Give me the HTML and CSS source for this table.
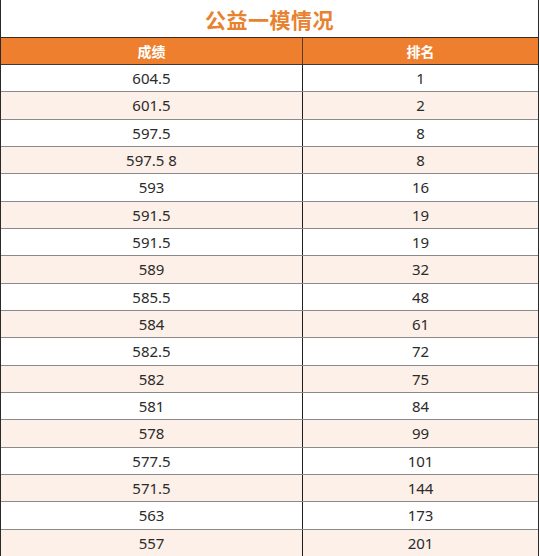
FILE: index.html
```html
<!DOCTYPE html>
<html lang="zh">
<head>
<meta charset="utf-8">
<title>公益一模情况</title>
<link rel="stylesheet" href="styles.css">
</head>
<body>
<div class="sheet">
  <div class="title">公益一模情况</div>
  <div class="head">
    <div class="cell">成绩</div>
    <div class="cell">排名</div>
  </div>
  <div class="body">
    <div class="row"><div class="cell">604.5</div><div class="cell">1</div></div>
    <div class="row alt"><div class="cell">601.5</div><div class="cell">2</div></div>
    <div class="row"><div class="cell">597.5</div><div class="cell">8</div></div>
    <div class="row alt"><div class="cell">597.5 8</div><div class="cell">8</div></div>
    <div class="row"><div class="cell">593</div><div class="cell">16</div></div>
    <div class="row alt"><div class="cell">591.5</div><div class="cell">19</div></div>
    <div class="row"><div class="cell">591.5</div><div class="cell">19</div></div>
    <div class="row alt"><div class="cell">589</div><div class="cell">32</div></div>
    <div class="row"><div class="cell">585.5</div><div class="cell">48</div></div>
    <div class="row alt"><div class="cell">584</div><div class="cell">61</div></div>
    <div class="row"><div class="cell">582.5</div><div class="cell">72</div></div>
    <div class="row alt"><div class="cell">582</div><div class="cell">75</div></div>
    <div class="row"><div class="cell">581</div><div class="cell">84</div></div>
    <div class="row alt"><div class="cell">578</div><div class="cell">99</div></div>
    <div class="row"><div class="cell">577.5</div><div class="cell">101</div></div>
    <div class="row alt"><div class="cell">571.5</div><div class="cell">144</div></div>
    <div class="row"><div class="cell">563</div><div class="cell">173</div></div>
    <div class="row alt"><div class="cell">557</div><div class="cell">201</div></div>
  </div>
</div>
</body>
</html>
```
FILE: styles.css
```css
html, body {
  margin: 0;
  padding: 0;
  background: #ffffff;
}
body {
  width: 540px;
  height: 556px;
  overflow: hidden;
  font-family: "Noto Sans", "Noto Sans CJK SC", sans-serif;
}
.sheet {
  width: 539px;
  height: 556px;
  border-left: 1px solid #2a2a2a;
  border-right: 1px solid #2a2a2a;
  box-sizing: border-box;
  display: flex;
  flex-direction: column;
}
.title {
  height: 37px;
  display: flex;
  align-items: center;
  justify-content: center;
  color: #e8822f;
  font-family: "Noto Sans CJK SC", sans-serif;
  font-weight: 700;
  font-size: 21px;
  letter-spacing: 0.5px;
  border-bottom: 1px solid #3a2a20;
}
.head {
  height: 26px;
  display: grid;
  grid-template-columns: 302px 1fr;
  background: #ee7f2f;
  color: #ffffff;
  font-family: "Noto Sans CJK SC", sans-serif;
  font-weight: 700;
  font-size: 14px;
}
.head .cell:first-child {
  border-right: 1px solid #5a3a20;
}
.body {
  flex: 1;
  display: grid;
  grid-template-rows: repeat(18, 1fr);
}
.row {
  display: grid;
  grid-template-columns: 302px 1fr;
  border-top: 1px solid #8a8a8a;
  color: #2b2b2b;
  font-size: 15px;
}
.row:first-child {
  border-top: 1px solid #3a3a3a;
}
.row.alt {
  background: #fdf0e8;
}
.cell {
  display: flex;
  align-items: center;
  justify-content: center;
}
.row .cell:first-child {
  border-right: 1px solid #1e1e1e;
}
```
